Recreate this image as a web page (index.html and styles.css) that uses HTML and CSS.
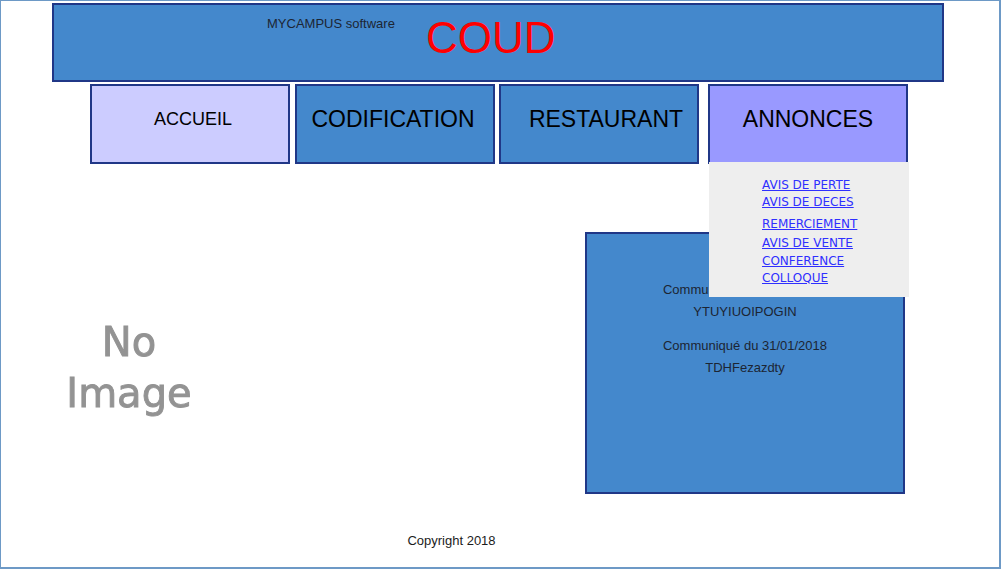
FILE: index.html
```html
<!DOCTYPE html>
<html lang="fr">
<head>
  <meta charset="UTF-8" />
  <meta name="viewport" content="width=device-width, initial-scale=1.0"/>
  <title>COUD - MYCAMPUS</title>
  <link rel="stylesheet" href="styles.css">
</head>
<body>
  <div class="cadre">
    <div class="page">
      <!-- En-tete -->
      <header class="entete">
        <span class="logiciel">MYCAMPUS software</span>
        <span class="titre">COUD</span>
      </header>

      <!-- Menu principal -->
      <nav class="menu">
        <a class="onglet accueil" href="#">ACCUEIL</a>
        <a class="onglet codification" href="#">CODIFICATION</a>
        <a class="onglet restaurant" href="#">RESTAURANT</a>
        <div class="onglet annonces">
          ANNONCES
          <div class="sous-menu">
            <a href="#">AVIS DE PERTE</a>
            <a href="#">AVIS DE DECES</a>
            <a class="espace" href="#">REMERCIEMENT</a>
            <a class="espace-petit" href="#">AVIS DE VENTE</a>
            <a class="espace-mini" href="#">CONFERENCE</a>
            <a href="#">COLLOQUE</a>
          </div>
        </div>
      </nav>

      <div class="contenu">
        <div class="photo">No<br />Image</div>

        <div class="communiques">
          <div class="communique">
            <div class="date">Communiqué du 30/01/2018</div>
            <div class="texte">YTUYIUOIPOGIN</div>
          </div>
          <div class="communique">
            <div class="date">Communiqué du 31/01/2018</div>
            <div class="texte">TDHFezazdty</div>
          </div>
        </div>
      </div>

      <footer class="pied">Copyright 2018</footer>
    </div>
  </div>
</body>
</html>
```

FILE: styles.css
```css
body {
  margin: 0;
  font-family: "Liberation Sans", Arial, sans-serif;
  background-color: #fff;
  color: #000;
}

.cadre {
  box-sizing: border-box;
  width: 1001px;
  height: 569px;
  border: 1px solid #6d99c6;
  border-right-width: 2px;
  border-bottom-width: 2px;
  overflow: hidden;
}

.page {
  width: 892px;
  margin-left: 51px;
  padding-top: 2px;
}

.entete {
  box-sizing: border-box;
  height: 79px;
  background-color: #4488cc;
  border: 2px solid #203787;
  display: flex;
  align-items: flex-start;
  padding-left: 213px;
}

.logiciel {
  font-size: 13px;
  color: #1c2533;
  margin-top: 11px;
}

.titre {
  font-size: 44px;
  color: #ff0000;
  margin-top: 8px;
  margin-left: 31px;
}

.menu {
  display: flex;
  margin-top: 2px;
  padding-left: 38px;
}

.onglet {
  box-sizing: border-box;
  width: 200px;
  height: 80px;
  border: 2px solid #203787;
  background-color: #4488cc;
  color: #000;
  font-size: 23px;
  text-decoration: none;
  display: flex;
  align-items: center;
  justify-content: center;
  padding-bottom: 9px;
  position: relative;
}

.onglet.accueil {
  background-color: #ccccff;
  font-size: 18px;
  padding-left: 6px;
  margin-right: 5px;
}

.onglet.codification {
  padding-right: 4px;
  margin-right: 4px;
}

.onglet.restaurant {
  padding-left: 14px;
  margin-right: 9px;
}

.onglet.annonces {
  background-color: #9999ff;
}

.sous-menu {
  position: absolute;
  top: 76px;
  left: -1px;
  width: 200px;
  box-sizing: border-box;
  background-color: #eeeeee;
  padding: 15px 0 10px 53px;
  z-index: 2;
}

.sous-menu a {
  display: block;
  font-family: "Comic Sans MS", "DejaVu Sans", sans-serif;
  font-size: 12px;
  line-height: 17px;
  color: #2f2fff;
}

.sous-menu a.espace {
  margin-top: 5px;
}

.sous-menu a.espace-petit {
  margin-top: 2px;
}

.sous-menu a.espace-mini {
  margin-top: 1px;
}

.contenu {
  display: flex;
  margin-top: 68px;
}

.photo {
  box-sizing: border-box;
  width: 200px;
  height: 262px;
  margin-left: -23px;
  padding-top: 10px;
  display: flex;
  align-items: center;
  justify-content: center;
  text-align: center;
  font-family: "DejaVu Sans", Verdana, sans-serif;
  font-size: 40px;
  line-height: 51px;
  color: #939393;
  -webkit-text-stroke: 0.9px #939393;
  filter: blur(0.6px);
}

.communiques {
  box-sizing: border-box;
  width: 320px;
  height: 262px;
  margin-left: 356px;
  border: 2px solid #203787;
  background-color: #4488cc;
  padding-top: 45px;
  text-align: center;
  font-size: 13px;
  color: #1c2533;
}

.communique {
  margin-bottom: 12px;
}

.communique .date,
.communique .texte {
  line-height: 22px;
}

.pied {
  margin-top: 39px;
  padding-right: 93px;
  text-align: center;
  font-size: 13px;
  color: #1c1c1c;
}
```
